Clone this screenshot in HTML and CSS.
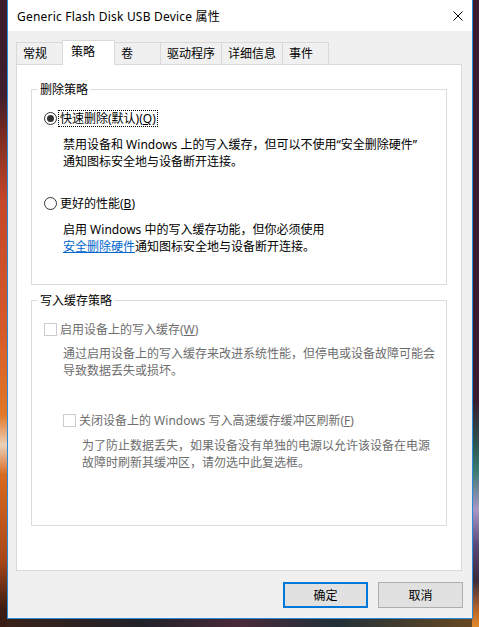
FILE: index.html
```html
<!DOCTYPE html>
<html>
<head>
    <meta charset="utf-8">
    <link rel="stylesheet" href="styles.css">
</head>
<body>
    <div class="window">
        <div class="titlebar">
            <span class="title">Generic Flash Disk USB Device 属性</span>
            <button class="close" title="关闭">
                <svg width="10" height="10" viewBox="0 0 10 10">
                    <path d="M0.5 0.5 L9.5 9.5 M9.5 0.5 L0.5 9.5" stroke="#000" stroke-width="1" fill="none"/>
                </svg>
            </button>
        </div>

        <div class="content">
            <ul class="tabs">
                <li class="tab">常规</li>
                <li class="tab active">策略</li>
                <li class="tab">卷</li>
                <li class="tab">驱动程序</li>
                <li class="tab">详细信息</li>
                <li class="tab">事件</li>
            </ul>

            <div class="panel">
                <fieldset class="group removal">
                    <legend>删除策略</legend>
                    <label class="option">
                        <span class="radio checked"></span>
                        <span class="caption focused">快速删除(默认)(<u>Q</u>)</span>
                    </label>
                    <p class="note">禁用设备和 Windows 上的写入缓存，但可以不使用“安全删除硬件”<br>通知图标安全地与设备断开连接。</p>

                    <label class="option second">
                        <span class="radio"></span>
                        <span class="caption">更好的性能(<u>B</u>)</span>
                    </label>
                    <p class="note">启用 Windows 中的写入缓存功能，但你必须使用<br><a href="#" class="link">安全删除硬件</a>通知图标安全地与设备断开连接。</p>
                </fieldset>

                <fieldset class="group cache">
                    <legend>写入缓存策略</legend>
                    <label class="option disabled">
                        <span class="check"></span>
                        <span class="caption">启用设备上的写入缓存(<u>W</u>)</span>
                    </label>
                    <p class="note disabled short">通过启用设备上的写入缓存来改进系统性能，但停电或设备故障可能会<br>导致数据丢失或损坏。</p>

                    <div class="nested">
                        <label class="option disabled">
                            <span class="check"></span>
                            <span class="caption">关闭设备上的 Windows 写入高速缓存缓冲区刷新(<u>F</u>)</span>
                        </label>
                        <p class="note disabled">为了防止数据丢失，如果设备没有单独的电源以允许该设备在电源<br>故障时刷新其缓冲区，请勿选中此复选框。</p>
                    </div>
                </fieldset>
            </div>

            <div class="actions">
                <button class="btn default">确定</button>
                <button class="btn">取消</button>
            </div>
        </div>
    </div>
</body>
</html>
```

FILE: styles.css
```css
* {
    box-sizing: border-box;
}

body {
    margin: 0;
    height: 627px;
    padding: 0 7px;
    overflow: hidden;
    font-family: "Noto Sans", "Noto Sans CJK SC", sans-serif;
    font-size: 12px;
    color: #000;
    /* desktop wallpaper peeking out around the dialog */
    background:
        linear-gradient(180deg, #3c1c2c 0, #3e1e2c 95px, #7a2c22 135px, #c4472a 200px,
            #d55a2a 330px, #e07828 415px, #ead0b8 445px, #d86a20 475px, #a8481a 560px,
            #3a1c14 610px) left top / 7px 100% no-repeat,
        linear-gradient(180deg, #3a1a2c 0, #3b1b2e 400px, #2c5650 445px, #3a7a70 470px,
            #a898c8 510px, #5a4878 545px, #3a2a3c 580px, #c06a28 612px, #e08a30 627px) right top / 7px 100% no-repeat,
        linear-gradient(90deg, #3a2218, #22222a 30%, #4a2a3a 50%, #223038 70%, #6a4a22) left bottom / 100% 8px no-repeat,
        #2a2228;
}

.window {
    width: 466px;
    height: 619px;
    display: flex;
    flex-direction: column;
    background-color: #f0f0f0;
    border: 1px solid #2b8ad8;
    border-top: none;
}

.titlebar {
    height: 31px;
    display: flex;
    align-items: center;
    justify-content: space-between;
    padding: 0 9px;
    background-color: #fff;
}

.title {
    letter-spacing: 0.2px;
}

.close {
    display: flex;
    padding: 0;
    border: none;
    background: none;
}

.content {
    flex: 1;
    display: flex;
    flex-direction: column;
    padding: 9px 9px 0 8px;
}

/* tab strip */
.tabs {
    display: flex;
    align-items: flex-end;
    height: 24px;
    margin: 0;
    padding: 0;
    list-style: none;
}

.tab {
    height: 22px;
    min-width: 47px;
    padding: 0 6px;
    margin-right: -1px;
    line-height: 21px;
    border: 1px solid #d9d9d9;
    border-bottom: none;
}

.tab.active {
    position: relative;
    z-index: 1;
    height: 25px;
    min-width: 53px;
    margin-bottom: -1px;
    padding-left: 8px;
    line-height: 22px;
    background-color: #fff;
}

.panel {
    flex: 1;
    margin-right: 1px;
    padding: 16px 14px 0;
    background-color: #fff;
    border: 1px solid #d9d9d9;
}

/* group boxes */
.group {
    margin: 0;
    padding: 12px 0 29px 6px;
    border: 1px solid #dcdcdc;
}

.group legend {
    padding: 0 2px;
    line-height: 17px;
}

.group.cache {
    margin-top: 7px;
    padding-bottom: 54px;
}

.option {
    display: flex;
    align-items: center;
    height: 17px;
    margin-left: 6px;
}

.option.second {
    margin-top: 25px;
}

.radio {
    width: 13px;
    height: 13px;
    display: flex;
    align-items: center;
    justify-content: center;
    border: 1px solid #333;
    border-radius: 50%;
    background-color: #fff;
}

.radio.checked::after {
    content: "";
    width: 7px;
    height: 7px;
    border-radius: 50%;
    background-color: #333;
}

.check {
    width: 13px;
    height: 13px;
    border: 1px solid #cccccc;
    background-color: #fff;
}

.caption {
    margin-left: 1px;
    padding: 0 1px;
    border: 1px dotted transparent;
    line-height: 15px;
}

.caption.focused {
    border-color: #000;
}

.note {
    margin: 10px 0 0 25px;
    line-height: 17px;
}

.option + .note {
    margin-top: 9px;
}

.note.short {
    margin-top: 7px;
}

.nested {
    margin: 33px 0 0 19px;
}

.nested .note {
    margin-top: 8px;
}

.disabled {
    color: #6d6d6d;
}

.link {
    color: #0066cc;
}

/* dialog buttons */
.actions {
    display: flex;
    justify-content: flex-end;
    gap: 10px;
    padding: 11px 0 10px;
}

.btn {
    width: 85px;
    height: 26px;
    padding: 0;
    font-family: inherit;
    font-size: 12px;
    color: #000;
    background-color: #e1e1e1;
    border: 1px solid #adadad;
}

.btn.default {
    border: 2px solid #0078d7;
}
```
